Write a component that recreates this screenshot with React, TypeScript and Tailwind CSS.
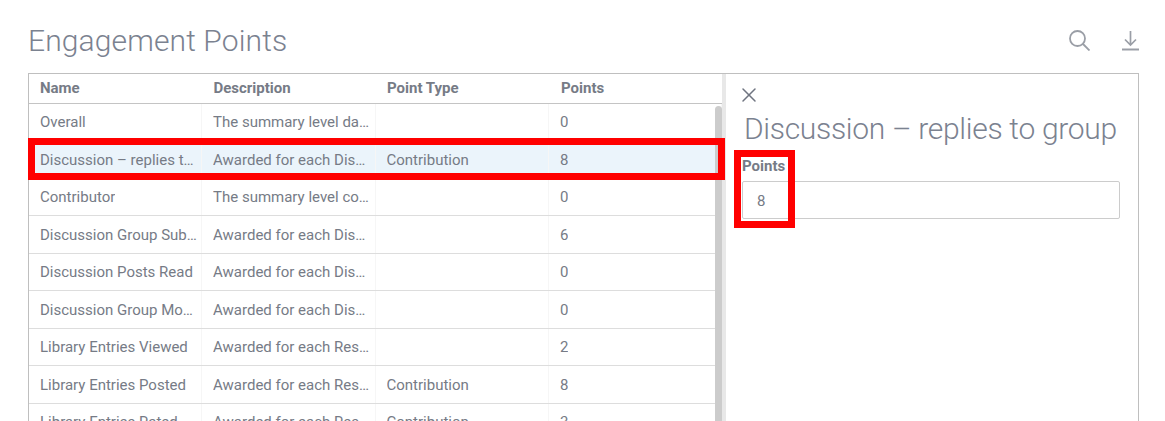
import { X } from "lucide-react";

const FONT = "font-['Roboto','Liberation_Sans',sans-serif]";

const rows = [
  { name: "Overall", description: "The summary level data for all", type: "", points: "0" },
  { name: "Discussion – replies to group", description: "Awarded for each Discussion reply", type: "Contribution", points: "8", selected: true },
  { name: "Contributor", description: "The summary level contribution", type: "", points: "0" },
  { name: "Discussion Group Subscribed", description: "Awarded for each Discussion group", type: "", points: "6" },
  { name: "Discussion Posts Read", description: "Awarded for each Discussion post", type: "", points: "0" },
  { name: "Discussion Group Moderated", description: "Awarded for each Discussion group", type: "", points: "0" },
  { name: "Library Entries Viewed", description: "Awarded for each Resource viewed", type: "", points: "2" },
  { name: "Library Entries Posted", description: "Awarded for each Resource posted", type: "Contribution", points: "8" },
  { name: "Library Entries Rated", description: "Awarded for each Resource rated", type: "Contribution", points: "3" },
];

const columns = "grid grid-cols-[173px_173.5px_173.5px_1fr]";

function SearchIcon() {
  return (
    <svg width="21" height="21" viewBox="0 0 21 21" fill="none" stroke="#9a9ea6" strokeWidth="1.8">
      <circle cx="8.500" cy="8.500" r="7.500" />
      <path d="m14 14 6.500 6.500" />
    </svg>
  );
}

function DownloadIcon() {
  return (
    <svg width="17" height="20" viewBox="0 0 17 20" fill="none" stroke="#9a9ea6" strokeWidth="1.7">
      <path d="M8.500 0v14M3 8.500l5.500 5.500L14 8.500" />
      <path d="M0 18.500h17" strokeWidth="2" />
    </svg>
  );
}

function Row({ row }: { row: (typeof rows)[number] }) {
  return (
    <div className={`${columns} h-[37.500px] shrink-0 items-center border-b border-[#dddddd] text-[15px] text-[#767b86] ${row.selected ? "bg-[#ebf4fb]" : ""}`}>
      {[row.name, row.description, row.type, row.points].map((value, i) => (
        <div key={i} className="flex h-full min-w-0 items-center border-r border-[#f6f6f6] pl-[11px] pr-[3px] pt-[1px]">
          <span className="truncate">{value}</span>
        </div>
      ))}
    </div>
  );
}

export default function App() {
  return (
    <div className={`${FONT} relative h-[421px] w-[1165px] overflow-hidden bg-white`}>
      <div className="flex h-[73px] items-start justify-between pl-[28px] pr-[26px] pt-[22px]">
        <h1 className="text-[30px] leading-[38px] font-light tracking-[0.12px] text-[#7b8290]">Engagement Points</h1>
        <div className="flex items-start gap-[32px] pt-[8px]">
          <SearchIcon />
          <div className="pt-[1px]">
            <DownloadIcon />
          </div>
        </div>
      </div>

      <div className="ml-[28px] flex h-[360px] w-[1111px] border border-[#bfbfbf]">
        {/* table */}
        <div className="relative flex w-[697px] shrink-0 flex-col border-r-[4px] border-[#e8e8e8]">
          <div className={`${columns} h-[29.500px] shrink-0 items-center border-b border-[#c4c4c4] text-[15px] font-bold text-[#767b86]`}>
            <div className="pl-[11px]">Name</div>
            <div className="pl-[11.500px]">Description</div>
            <div className="pl-[11.500px]">Point Type</div>
            <div className="pl-[12px]">Points</div>
          </div>
          {rows.map((row) => (
            <Row key={row.name} row={row} />
          ))}
          <div className="absolute bottom-0 right-0 top-[32px] w-[7px] rounded-t-[4px] bg-[#cccccc]" />
        </div>

        {/* detail panel */}
        <div className="flex min-w-0 flex-1 flex-col pl-[16px] pr-[18px] pt-[9px]">
          <X size={24} strokeWidth={1.5} className="-ml-[5px] text-[#6f7480]" />
          <h2 className="mt-[3px] ml-[2px] whitespace-nowrap text-[30px] leading-[38px] font-light tracking-[-0.3px] text-[#7b8290]">
            Discussion – replies to group
          </h2>
          <label className="mt-[8px] text-[15px] leading-[20px] font-bold text-[#767b86]">Points</label>
          <input
            readOnly
            value="8"
            className="mt-[5px] h-[38px] rounded-[2px] border border-[#cccccc] px-[14px] pt-[1px] text-[15px] text-[#767b86] outline-none"
          />
        </div>
      </div>

      {/* red annotation boxes */}
      <div className="absolute left-[28px] top-[138px] h-[42px] w-[697px] border-[7px] border-[#ff0000]" />
      <div className="absolute left-[734px] top-[150px] h-[78px] w-[61px] border-[7px] border-[#ff0000]" />
    </div>
  );
}
